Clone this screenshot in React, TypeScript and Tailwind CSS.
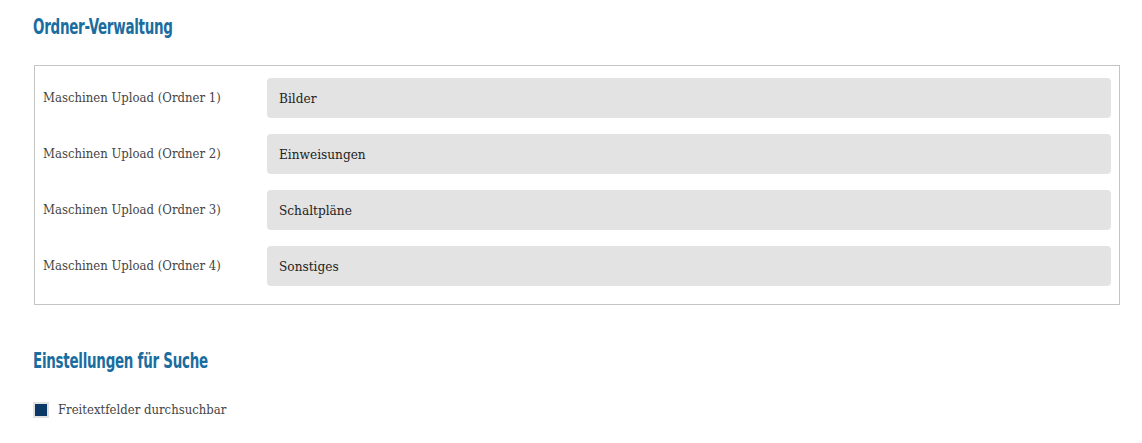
import React from 'react';

const folders = ['Bilder', 'Einweisungen', 'Schaltpläne', 'Sonstiges'];

function Heading({ children, className = '' }: { children: React.ReactNode; className?: string }) {
  return (
    <h2 className={`h-7 ${className}`}>
      <span className="block w-max origin-left scale-x-[0.68] font-['DejaVu_Sans',sans-serif] text-[22px] leading-[28px] font-bold tracking-[-0.4px] whitespace-nowrap text-[#1a6d9f] [font-stretch:condensed]">
        {children}
      </span>
    </h2>
  );
}

export default function App() {
  return (
    <div className="min-h-[443px] bg-white px-[33px] pt-[13px] font-['DejaVu_Serif',serif] text-[13px] text-[#333]">
      <Heading>Ordner-Verwaltung</Heading>

      <div className="mt-[24px] ml-px w-[1086px] border border-[#c4c4c4] pt-3 pb-[18px] pr-2 pl-2">
        <div className="flex flex-col gap-4">
          {folders.map((name, i) => (
            <div key={name} className="flex items-center">
              <label className="w-[224px] shrink-0 text-[#444] [font-stretch:condensed]">
                Maschinen Upload (Ordner {i + 1})
              </label>
              <input
                type="text"
                defaultValue={name}
                className="h-10 flex-1 rounded-[4px] bg-[#e3e3e3] px-3 text-[13.5px] text-[#222] outline-none [font-stretch:condensed]"
              />
            </div>
          ))}
        </div>
      </div>

      <Heading className="mt-[42px]">Einstellungen für Suche</Heading>

      <label className="mt-[25px] flex items-center gap-[9px] text-[#444] [font-stretch:condensed]">
        <span className="flex h-4 w-4 items-center justify-center bg-[#e2e2e2]">
          <span className="h-3 w-3 bg-[#0b3867]" />
        </span>
        Freitextfelder durchsuchbar
      </label>
    </div>
  );
}
